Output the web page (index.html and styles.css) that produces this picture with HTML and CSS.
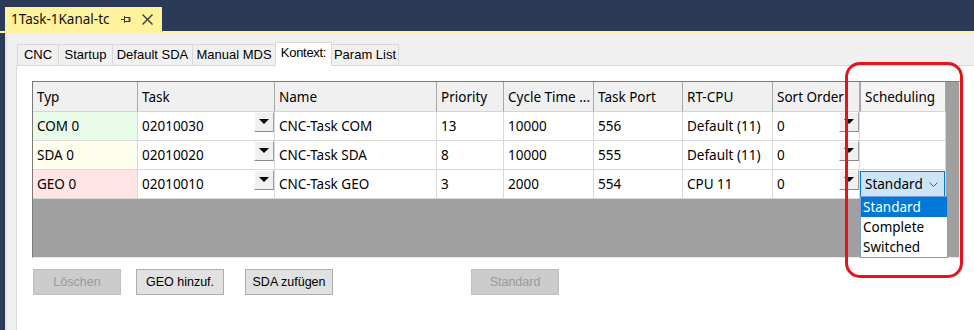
FILE: index.html
```html
<!DOCTYPE html>
<html lang="de">
<head>
<meta charset="utf-8">
<title>1Task-1Kanal-tc</title>
<link rel="stylesheet" href="styles.css">
</head>
<body>
<div class="window">
  <div class="doc-bar">
    <div class="doc-tab">
      <span class="doc-title">1Task-1Kanal-tc</span>
      <svg class="pin" width="10" height="9" viewBox="0 0 10 9"><path d="M0 4.5H3.5M3.5 1V8M3.5 2.5H9V6.5H3.5M8 2.5V6.5" fill="none" stroke="#3a3a3a" stroke-width="1"/></svg>
      <svg class="close" width="11" height="11" viewBox="0 0 11 11"><path d="M0.5 0.5L10.5 10.5M10.5 0.5L0.5 10.5" stroke="#3a3a3a" stroke-width="1.4"/></svg>
    </div>
  </div>
  <div class="doc-line"></div>
  <div class="body-row">
    <div class="side"></div>
    <div class="panel">
      <div class="tabs">
        <div class="tab t-cnc">CNC</div>
        <div class="tab t-start">Startup</div>
        <div class="tab t-sda">Default SDA</div>
        <div class="tab t-mds">Manual MDS</div>
        <div class="tab tab-active t-kon">Kontext:</div>
        <div class="tab t-par">Param List</div>
      </div>
      <div class="page">
        <div class="grid">
          <div class="table">
            <div class="hc">Typ</div>
            <div class="hc">Task</div>
            <div class="hc">Name</div>
            <div class="hc">Priority</div>
            <div class="hc">Cycle Time ...</div>
            <div class="hc">Task Port</div>
            <div class="hc">RT-CPU</div>
            <div class="hc">Sort Order</div>
            <div class="hc hc-sched">Scheduling</div>

            <div class="c type-com">COM 0</div>
            <div class="c">02010030<span class="dd"><span class="tri"></span></span></div>
            <div class="c">CNC-Task COM</div>
            <div class="c">13</div>
            <div class="c">10000</div>
            <div class="c">556</div>
            <div class="c">Default (11)</div>
            <div class="c">0<span class="dd"><span class="tri"></span></span></div>
            <div class="c"></div>

            <div class="c type-sda">SDA 0</div>
            <div class="c">02010020<span class="dd"><span class="tri"></span></span></div>
            <div class="c">CNC-Task SDA</div>
            <div class="c">8</div>
            <div class="c">10000</div>
            <div class="c">555</div>
            <div class="c">Default (11)</div>
            <div class="c">0<span class="dd"><span class="tri"></span></span></div>
            <div class="c"></div>

            <div class="c type-geo">GEO 0</div>
            <div class="c">02010010<span class="dd"><span class="tri"></span></span></div>
            <div class="c">CNC-Task GEO</div>
            <div class="c">3</div>
            <div class="c">2000</div>
            <div class="c">554</div>
            <div class="c">CPU 11</div>
            <div class="c">0<span class="dd"><span class="tri"></span></span></div>
            <div class="c c-sched">
              <div class="combo">
                <span>Standard</span>
                <svg class="chev" width="9" height="5" viewBox="0 0 9 5"><path d="M0.5 0.5L4.5 4.5L8.5 0.5" fill="none" stroke="#5a5a5a" stroke-width="1"/></svg>
              </div>
              <div class="list">
                <div class="item item-sel">Standard</div>
                <div class="item">Complete</div>
                <div class="item">Switched</div>
              </div>
            </div>
          </div>
        </div>
        <div class="buttons">
          <button class="btn btn-disabled b-del">Löschen</button>
          <button class="btn b-geo">GEO hinzuf.</button>
          <button class="btn b-sda">SDA zufügen</button>
          <button class="btn btn-disabled b-std">Standard</button>
        </div>
      </div>
    </div>
  </div>
</div>
<div class="annotation"></div>
</body>
</html>
```
FILE: styles.css
```css
* { box-sizing: border-box; }
html, body { margin: 0; padding: 0; }
body {
  width: 974px;
  height: 330px;
  overflow: hidden;
  background: #2a3a57;
  font-family: "Noto Sans", "Open Sans", sans-serif;
  color: #000;
}
.window {
  display: flex;
  flex-direction: column;
  height: 330px;
}
.doc-bar {
  height: 31px;
  padding: 7px 0 0 5px;
  display: flex;
  align-items: flex-end;
}
.doc-tab {
  width: 157px;
  height: 24px;
  background: #fff29d;
  display: flex;
  align-items: center;
  padding-left: 6px;
}
.doc-title {
  font-size: 13.5px;
  color: #111;
  white-space: nowrap;
  flex-shrink: 0;
}
.pin { margin-left: auto; flex-shrink: 0; }
.close { margin-left: 11px; margin-right: 9px; flex-shrink: 0; }
.doc-line {
  height: 2px;
  background: #fff29d;
}
.body-row {
  flex: 1;
  display: flex;
}
.side {
  width: 5px;
  background: #2a3a57;
}
.panel {
  flex: 1;
  background: #f0f0f0;
  border-left: 2px solid #e4e4e4;
  padding: 11px 0 0 9px;
  display: flex;
  flex-direction: column;
}
.tabs {
  height: 21px;
  display: flex;
  align-items: flex-end;
  padding-left: 1px;
}
.tab {
  height: 21px;
  border: 1px solid #d9d9d9;
  border-bottom: none;
  margin-right: -1px;
  background: #f0f0f0;
  font-family: "Liberation Sans", Arial, sans-serif;
  font-size: 13px;
  line-height: 20px;
  color: #000;
  text-align: center;
  white-space: nowrap;
}
.t-cnc { width: 42px; }
.t-start { width: 55px; }
.t-sda { width: 81px; }
.t-mds { width: 84px; }
.t-kon { width: 57px; }
.t-par { width: 68px; }
.tab-active {
  height: 24px;
  margin-bottom: -1px;
  background: #fff;
  position: relative;
  z-index: 1;
  line-height: 20px;
  letter-spacing: -0.3px;
}
.page {
  flex: 1;
  background: #fff;
  border-left: 1px solid #d9d9d9;
  border-top: 1px solid #d9d9d9;
  padding: 15px 14px 0 15px;
}
.grid {
  width: 928px;
  height: 177px;
  background: #a0a0a0;
  border-left: 1px solid #7a7a7a;
  border-top: 1px solid #7a7a7a;
  border-right: 1px solid #e8e8e8;
  border-bottom: 1px solid #e8e8e8;
}
.table {
  display: grid;
  grid-template-columns: 105px 137px 162px 67px 90px 89px 90px 87px 86px;
  grid-template-rows: 30px 29px 29px 29px;
  width: 913px;
  font-size: 13.5px;
}
.hc {
  background: #f0f0f0;
  border-right: 1px solid #a8a8a8;
  border-bottom: 1px solid #d4d4d4;
  padding-left: 4px;
  display: flex;
  align-items: center;
  white-space: nowrap;
  overflow: hidden;
}
.hc-sched {
  border-left: 1px solid #a8a8a8;
  padding-left: 4px;
  background: #f4f4f4;
}
.c {
  background: #fff;
  border-right: 1px solid #d8d8d8;
  border-bottom: 1px solid #d8d8d8;
  padding-left: 4px;
  display: flex;
  align-items: center;
  white-space: nowrap;
  position: relative;
}
.type-com { background: #e8fbe8; }
.type-sda { background: #fefeec; }
.type-geo { background: #ffe5e5; }
.dd {
  margin-left: auto;
  align-self: flex-start;
  width: 20px;
  height: 20px;
  background: #f0f0f0;
  border-top: 1px solid #fff;
  border-left: 1px solid #fff;
  border-right: 1px solid #a0a0a0;
  border-bottom: 1px solid #8a8a8a;
  display: flex;
  justify-content: center;
  padding-top: 6px;
}
.tri {
  width: 0;
  height: 0;
  border-left: 5px solid transparent;
  border-right: 5px solid transparent;
  border-top: 5px solid #000;
}
.c-sched {
  padding-left: 0;
  overflow: visible;
}
.combo {
  width: 100%;
  height: 26px;
  background: #cce4f7;
  border: 1px solid #0078d7;
  display: flex;
  align-items: center;
  padding: 0 6px 0 4px;
  font-size: 13.5px;
}
.chev { margin-left: auto; }
.list {
  position: absolute;
  left: 0;
  top: 26px;
  width: 88px;
  background: #fff;
  border: 1px solid #7a9ccc;
  z-index: 2;
}
.item {
  height: 20px;
  line-height: 20px;
  padding-left: 2px;
  font-size: 13.5px;
}
.item-sel {
  background: #0078d7;
  color: #fff;
}
.buttons {
  display: flex;
  margin-top: 11px;
}
.btn {
  width: 88px;
  height: 26px;
  background: #e1e1e1;
  border: 1px solid #adadad;
  font-family: "Liberation Sans", Arial, sans-serif;
  font-size: 12.5px;
  color: #000;
  padding: 0;
}
.btn-disabled {
  background: #cccccc;
  border-color: #bfbfbf;
  color: #9a9a9a;
}
.b-del { margin-left: 1px; }
.b-geo { margin-left: 15px; }
.b-sda { margin-left: 21px; }
.b-std { margin-left: 138px; }
.annotation {
  position: absolute;
  left: 845px;
  top: 62px;
  width: 118px;
  height: 216px;
  border: 3px solid #e3141c;
  border-radius: 15px;
  z-index: 5;
}
```
